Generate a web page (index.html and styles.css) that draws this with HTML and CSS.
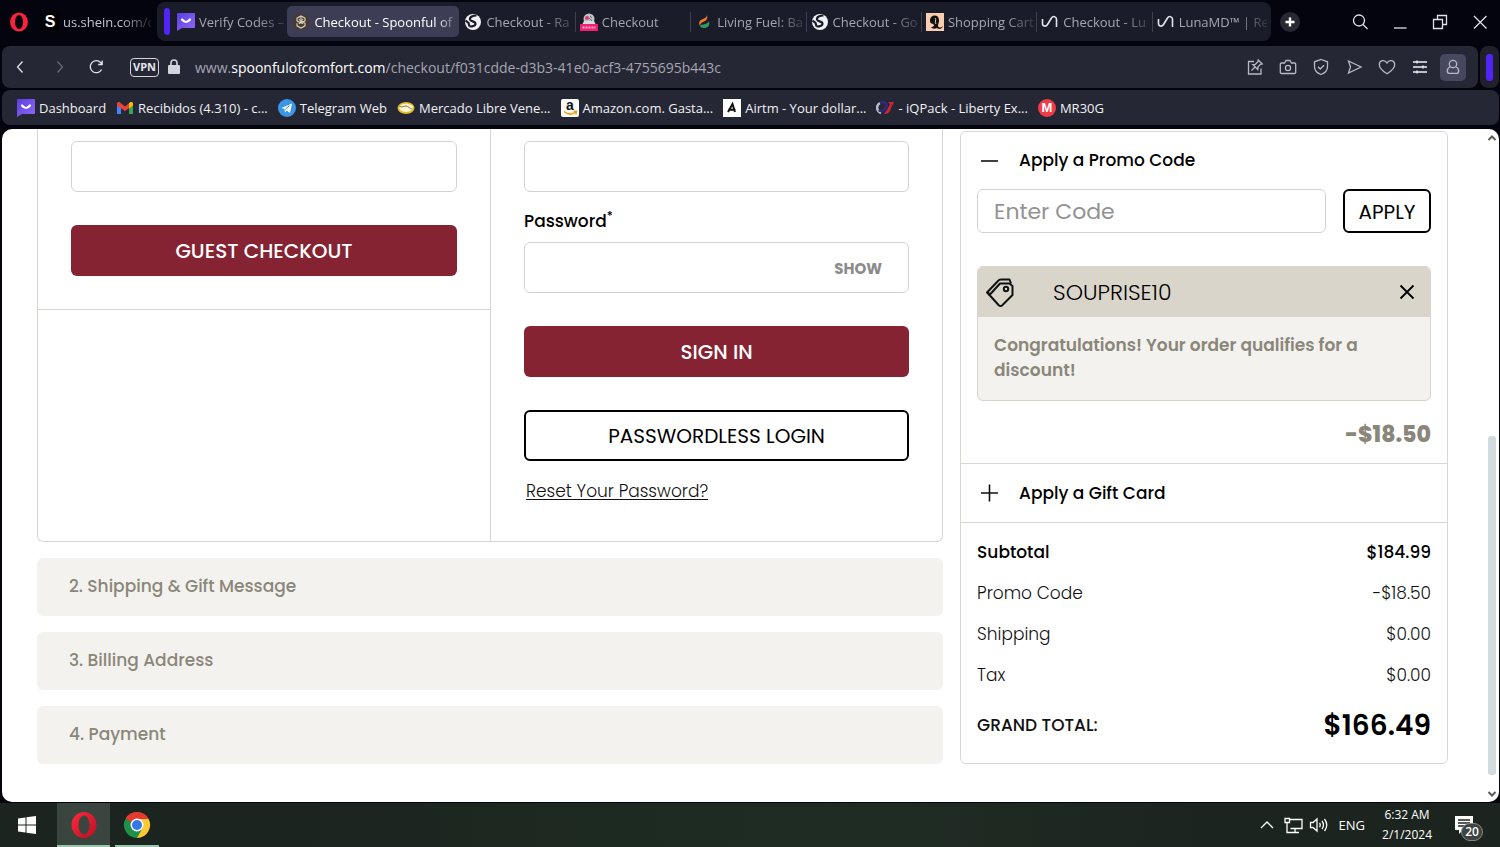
FILE: index.html
```html
<!DOCTYPE html>
<html lang="en">
<head>
<meta charset="utf-8">
<meta name="viewport" content="width=device-width, initial-scale=1">
<title>Checkout - Spoonful of Comfort</title>
<link rel="stylesheet" href="styles.css">
</head>
<body>
<svg class="defs" aria-hidden="true">
  <defs>
    <linearGradient id="violet" x1="0" y1="0" x2="1" y2="1"><stop offset="0" stop-color="#5a3fe0"/><stop offset="1" stop-color="#9068f5"/></linearGradient>
    <linearGradient id="red" x1="0" y1="0" x2="1" y2="1"><stop offset="0" stop-color="#ff2a3c"/><stop offset="1" stop-color="#b80f22"/></linearGradient>
  </defs>
  <symbol id="chat" viewBox="0 0 18 18"><path d="M1 0h16a1 1 0 0 1 1 1v13a1 1 0 0 1-1 1H5l-5 3V1a1 1 0 0 1 1-1z" fill="url(#violet)"/><path d="M5 6.500q4 5 8 0" fill="none" stroke="#fff" stroke-width="2.200" stroke-linecap="round"/></symbol>
  <symbol id="globe" viewBox="0 0 18 18"><circle cx="9" cy="9" r="8" fill="#f1f2f5"/><path d="M12.500 2.500C9 2.500 5.500 4 6 6.500c.5 2.300 6 1.500 5.500 4.500-.4 2.200-3.500 2.500-6 2.500M1.500 7.500l3 2.500 1 3.500" fill="none" stroke="#1b1c2a" stroke-width="2.200"/></symbol>
  <symbol id="wave" viewBox="0 0 18 18"><path d="M1.500 6v4.500c0 3 3.500 3.500 5 1l4-6.500c1.500-2.500 5-1.500 5 1.200V14" fill="none" stroke="#e4e5ea" stroke-width="1.600"/></symbol>
</svg>

<header class="browser">
  <div class="titlebar">
    <svg class="opera" viewBox="0 0 20 20"><ellipse cx="10" cy="10" rx="9" ry="9.500" fill="#f5233c"/><ellipse cx="10" cy="10" rx="4" ry="7" fill="#04040f"/></svg>
    <a class="tab pinned" href="#"><span class="fav fav-s">S</span><span class="tab-text">us.shein.com/c</span></a>
    <nav class="tabgroup" aria-label="Tabs">
      <span class="group-bar"></span>
      <a class="tab plain" href="#"><svg class="fav"><use href="#chat"/></svg><span class="tab-text">Verify Codes –</span></a>
      <a class="tab active" href="#"><svg class="fav" viewBox="0 0 18 18"><circle cx="9" cy="9" r="8.500" fill="#443b35"/><path d="M9 3l4 2.200v2.600L9 10 5 7.800V5.200zM5 10.200v2.600L9 15l4-2.200v-2.600L9 8M9 3v4M7 6l4 5M11 6l-4 5" fill="none" stroke="#ddd0bd" stroke-width="1.100"/></svg><span class="tab-text">Checkout - Spoonful of</span></a>
      <a class="tab plain" href="#"><svg class="fav"><use href="#globe"/></svg><span class="tab-text">Checkout - Ra</span></a>
      <a class="tab" href="#"><svg class="fav" viewBox="0 0 18 18"><circle cx="9" cy="6" r="5.500" fill="#bfc0c8"/><path d="M4 8h10l2 4H2z" fill="#d9d9df"/><circle cx="7" cy="5" r="2" fill="#d93f68"/><path d="M9 5l3 3M10 3l2 2" stroke="#666672"/><rect y="11" width="18" height="7" fill="#f01f70"/><path d="M2.500 14.500h13" stroke="#ffb3d0" stroke-width="2" stroke-dasharray="2 1"/></svg><span class="tab-text">Checkout</span></a>
      <a class="tab" href="#"><svg class="fav" viewBox="0 0 18 18"><path d="M12 2c1 4-1 6-4 7-2 1-3 2-3 4-2-4 0-6 3-7 2-1 4-2 4-4z" fill="#f07a2a"/><path d="M14 8c1 5-1 7-5 7-2 0-4-1-4-2 1-2 3-1 5-2s3-1 4-3z" fill="#2f9a63"/></svg><span class="tab-text">Living Fuel: Ba</span></a>
      <a class="tab" href="#"><svg class="fav"><use href="#globe"/></svg><span class="tab-text">Checkout - Go</span></a>
      <a class="tab" href="#"><svg class="fav" viewBox="0 0 18 18"><rect width="18" height="18" fill="#f8cdb0"/><path d="M4 8c0-7 9-7 9-1 0 3-1 4-1 6 1 2 3 2 5 0-1 3-4 4-6 2-2 1-5 1-6-1 3 0 4-2 2-3S4 10 4 8z" fill="#111"/><path d="M9 5c2 2-1 4 1 6" fill="none" stroke="#f8cdb0"/></svg><span class="tab-text">Shopping Cart</span></a>
      <a class="tab" href="#"><svg class="fav"><use href="#wave"/></svg><span class="tab-text">Checkout - Lu</span></a>
      <a class="tab" href="#"><svg class="fav"><use href="#wave"/></svg><span class="tab-text">LunaMD™ | Re</span></a>
    </nav>
    <button class="newtab" aria-label="New tab"><svg viewBox="0 0 20 20"><path d="M10 5.500v9M5.500 10h9" stroke="#fff" stroke-width="2.400"/></svg></button>
    <div class="window-buttons">
      <button aria-label="Search tabs"><svg viewBox="0 0 20 20"><circle cx="9" cy="8.500" r="5.500"/><path d="M13 12.500l4.500 4.500"/></svg></button>
      <button aria-label="Minimize"><svg viewBox="0 0 20 20"><path d="M4 16h12.500"/></svg></button>
      <button aria-label="Restore"><svg viewBox="0 0 20 20"><path d="M3.500 7.500h9v9h-9zM7.500 7.500v-4h9v9h-4"/></svg></button>
      <button aria-label="Close"><svg viewBox="0 0 20 20"><path d="M4 4l12.500 12.500M16.500 4L4 16.500"/></svg></button>
    </div>
  </div>

  <div class="toolrow">
    <div class="toolbar">
      <button class="nav-btn" aria-label="Back"><svg viewBox="0 0 20 20"><path d="M12.500 4.500L7.500 10l5 5.500"/></svg></button>
      <button class="nav-btn dim" aria-label="Forward"><svg viewBox="0 0 20 20"><path d="M9.500 4.500l5 5.500-5 5.500"/></svg></button>
      <button class="nav-btn reload" aria-label="Reload"><svg viewBox="0 0 20 20"><path d="M15.600 12.500a6 6 0 1 1-1-7L16 7M16.200 3.500V7.500h-4"/></svg></button>
      <button class="vpn">VPN</button>
      <svg class="lock" viewBox="0 0 14 18"><rect x="1" y="7" width="12" height="9" rx="1" fill="#d4d5dc"/><path d="M4 8V5a3 3 0 0 1 6 0v3" fill="none" stroke="#d4d5dc" stroke-width="1.600"/></svg>
      <a class="url" href="#">www.<b>spoonfulofcomfort.com</b>/checkout/f031cdde-d3b3-41e0-acf3-4755695b443c</a>
      <div class="tools">
        <button aria-label="Pin page"><svg viewBox="0 0 20 20"><path d="M9 4.500H3.500v12.500H16V11.500M13.200 3l4 4-1.700.4-2.500 2.500-.2 2.600-5-5 2.600-.2 2.500-2.500zM10 10l-3.500 3.500"/></svg></button>
        <button aria-label="Snapshot"><svg viewBox="0 0 20 20"><path d="M3.500 6h3L8 3.500h4L13.500 6h3a1.200 1.200 0 0 1 1.200 1.200v8a1.200 1.200 0 0 1-1.200 1.300h-13a1.200 1.200 0 0 1-1.200-1.300v-8A1.200 1.200 0 0 1 3.500 6z"/><circle cx="10" cy="11" r="2.600"/></svg></button>
        <button aria-label="Tracker blocker"><svg viewBox="0 0 20 20"><path d="M10 2.500l6.500 2.300v5c0 4-3 6.500-6.500 7.700-3.500-1.200-6.500-3.700-6.500-7.700v-5zM7 9.800l2.200 2.200L13 8.200"/></svg></button>
        <button aria-label="Send"><svg viewBox="0 0 20 20"><path d="M4.500 4L17 10 4.500 16l2-6z"/></svg></button>
        <button aria-label="Favorites"><svg viewBox="0 0 20 20"><path d="M10 16.800C5.500 14 2.300 11 2.300 7.500 2.300 3 8 2.300 10 6c2-3.700 7.700-3 7.700 1.500C17.700 11 14.500 14 10 16.800z"/></svg></button>
        <button class="bright" aria-label="Easy setup"><svg viewBox="0 0 20 20"><path d="M3 5h14M3 10h14M3 15h14M7 3.500v3M13 8.500v3M7 13.500v3"/></svg></button>
        <button class="profile" aria-label="Profile"><svg viewBox="0 0 20 20"><circle cx="10" cy="7" r="3.700"/><path d="M7 9.800C3 12 4.200 16.300 6 16.300h8c1.800 0 3-4.300-1-6.500"/></svg></button>
      </div>
    </div>
    <div class="side-toggle"><span></span></div>
  </div>

  <nav class="bookmarks" aria-label="Bookmarks">
    <a href="#"><svg class="fav"><use href="#chat"/></svg>Dashboard</a>
    <a href="#"><svg class="fav" viewBox="0 0 18 18"><path d="M1 4v11h4V8z" fill="#4285f4"/><path d="M17 4v11h-4V8z" fill="#34a853"/><path d="M1 5c0-2 2-2.500 3-1.500L9 7.500l5-4C15 2.500 17 3 17 5v1.500L9 12 1 6.500z" fill="#ea4335"/><path d="M14 3.500C15 2.500 17 3 17 5v1.500l-4 3V4z" fill="#fbbc04"/></svg>Recibidos (4.310) - c...</a>
    <a href="#"><svg class="fav" viewBox="0 0 18 18"><circle cx="9" cy="9" r="9" fill="#3a97e8"/><path d="M3.500 9L14 4.500 12 14 8.500 11.500 7 13.500 6.500 10z" fill="#fff"/><path d="M7 10.500l4.500-3.800" stroke="#3a97e8"/></svg>Telegram Web</a>
    <a href="#"><svg class="fav" viewBox="0 0 18 18"><ellipse cx="9" cy="9" rx="8.500" ry="6" fill="#e3bd28"/><path d="M2 7q7-5 14 0l-1 4q-6 4-12 0z" fill="#fff6d8"/><path d="M2 7c3 2 5 0 7 0s4 3 6 3" fill="none" stroke="#8d7832"/></svg>Mercado Libre Vene...</a>
    <a href="#"><svg class="fav amazon" viewBox="0 0 18 18"><rect width="18" height="18" rx="2" fill="#fff"/><text class="amazon-a" x="9" y="11" text-anchor="middle">a</text><path d="M3 12.500q6 5 11.500.5M14.800 15.500l.7-3.200-3 .2" fill="none" stroke="#f90" stroke-width="1.500"/></svg>Amazon.com. Gasta...</a>
    <a href="#"><svg class="fav" viewBox="0 0 18 18"><rect width="18" height="18" fill="#fff"/><path d="M5 13l4.500-8 2.500 8M5.500 10.500l7 .5" fill="none" stroke="#111" stroke-width="2"/></svg>Airtm - Your dollar...</a>
    <a href="#"><svg class="fav" viewBox="0 0 18 18"><path d="M4 4C0 6 0 12 5 14" fill="none" stroke="#b9bac4" stroke-width="2.500"/><path d="M4 4c5-2 8 0 6 4s-5 5-7 3" fill="none" stroke="#2d2a7c" stroke-width="2.500"/><path d="M18 3h-6l2 2-3 6-3 4c4 0 6-2 7-6z" fill="#cf2436"/></svg>- iQPack - Liberty Ex...</a>
    <a href="#"><span class="fav fav-m">M</span>MR30G</a>
  </nav>
</header>

<main class="page">
  <div class="checkout">
    <div class="steps">
      <section class="account" aria-label="Account">
        <form class="guest">
          <input class="field" type="email" aria-label="Guest email">
          <button class="btn solid" type="button">GUEST CHECKOUT</button>
        </form>
        <form class="signin">
          <input class="field" type="email" aria-label="Email">
          <label class="label" for="password">Password<sup>*</sup></label>
          <div class="password"><input class="field" id="password" type="password"><button class="show" type="button">SHOW</button></div>
          <button class="btn solid" type="button">SIGN IN</button>
          <button class="btn outline" type="button">PASSWORDLESS LOGIN</button>
          <a class="reset" href="#">Reset Your Password?</a>
        </form>
      </section>
      <h2 class="step">2. Shipping &amp; Gift Message</h2>
      <h2 class="step">3. Billing Address</h2>
      <h2 class="step">4. Payment</h2>
    </div>

    <aside class="summary">
      <section class="promo">
        <button class="toggle" type="button" aria-expanded="true"><svg viewBox="0 0 20 20"><path d="M2 10h17"/></svg>Apply a Promo Code</button>
        <form class="code-row">
          <input class="code" type="text" placeholder="Enter Code" aria-label="Promo code">
          <button class="apply" type="button">APPLY</button>
        </form>
        <div class="coupon">
          <div class="coupon-head">
            <svg class="tag" viewBox="0 0 30 30"><path d="M15 6.500h9.500l3 2.500v9L17 28.500q-1.500 1-3 0L4.500 18z"/><path d="M4.500 18L2 15.500 13 4q1-1.500 3-1.500h8.500l1.500 4M3 15l1.500 3"/><circle cx="21" cy="12" r="2.200"/></svg>
            <span>SOUPRISE10</span>
            <button class="remove" type="button" aria-label="Remove code"><svg viewBox="0 0 20 20"><path d="M3.500 3.500l13 13M16.500 3.500l-13 13"/></svg></button>
          </div>
          <p>Congratulations! Your order qualifies for a discount!</p>
        </div>
        <p class="discount">-$18.50</p>
      </section>
      <section class="gift">
        <button class="toggle" type="button" aria-expanded="false"><svg viewBox="0 0 20 20"><path d="M2 10h17M10.500 1.500v17"/></svg>Apply a Gift Card</button>
      </section>
      <table class="totals">
        <tr class="subtotal"><th scope="row">Subtotal</th><td>$184.99</td></tr>
        <tr><th scope="row">Promo Code</th><td>-$18.50</td></tr>
        <tr><th scope="row">Shipping</th><td>$0.00</td></tr>
        <tr><th scope="row">Tax</th><td>$0.00</td></tr>
        <tr class="grand"><th scope="row">GRAND TOTAL:</th><td>$166.49</td></tr>
      </table>
    </aside>
  </div>
  <div class="scrollbar" aria-hidden="true">
    <svg viewBox="0 0 10 10"><path d="M1.500 7L5 3.500 8.500 7"/></svg>
    <span class="track"></span>
    <span class="thumb"></span>
    <svg viewBox="0 0 10 10"><path d="M1.500 3L5 6.500 8.500 3"/></svg>
  </div>
</main>

<footer class="taskbar">
  <button class="start" aria-label="Start"><svg viewBox="0 0 20 20"><path d="M1 3.500l7.500-1v7H1zM9.500 2.300L19 1v8.500H9.500zM1 10.500h7.500v7l-7.500-1zM9.500 10.500H19V19l-9.500-1.300z" fill="#fff"/></svg></button>
  <button class="task current" aria-label="Opera"><svg viewBox="0 0 28 28"><ellipse cx="14" cy="14" rx="12.500" ry="13" fill="url(#red)"/><ellipse cx="14" cy="14" rx="5.500" ry="9.500" fill="#3a453f"/></svg></button>
  <button class="task" aria-label="Chrome"><svg viewBox="0 0 28 28"><path d="M14 14L2.700 7.500A13 13 0 0 1 25.300 7.500z" fill="#e33b2e"/><path d="M14 14l11.300-6.500A13 13 0 0 1 14 27z" fill="#fcc934"/><path d="M14 14l5.500 3.200L14 27A13 13 0 0 1 2.700 7.500z" fill="#1e9049"/><path d="M14 8h11.500l-6 9.500z" fill="#fcc934"/><path d="M2.700 7.500A13 13 0 0 1 25.300 7.500V8H14l-5 4z" fill="#e33b2e"/><circle cx="14" cy="14" r="6.500" fill="#fff"/><circle cx="14" cy="14" r="5" fill="#3478e8"/></svg></button>
  <div class="tray">
    <svg viewBox="0 0 20 20"><path d="M4 13l6-6 6 6"/></svg>
    <svg viewBox="0 0 20 20"><path d="M6.500 4.500H19v9H7.500M12 13.500V17M8 17.500h8M2 3.500h4.500v4H2zM4 7.500v10h4"/></svg>
    <svg viewBox="0 0 20 20"><path d="M1.500 7.500H4l4-3.500v12l-4-3.500H1.500zM10.500 8q1.500 2 0 4M13 6q3 4 0 8M15.500 4q4.500 6 0 12"/></svg>
    <span class="lang">ENG</span>
    <span class="clock"><time>6:32 AM</time><time>2/1/2024</time></span>
    <button class="notes" aria-label="Notifications"><svg viewBox="0 0 20 20"><path d="M1 1h18v14H9l-4 4v-4H1z" fill="#fff"/><path d="M4 5h12M4 8h12M4 11h7" stroke="#1e2722" stroke-width="1.300"/></svg><span>20</span></button>
  </div>
</footer>
</body>
</html>
```
FILE: styles.css
```css
* { box-sizing: border-box; }
body {
  margin: 0;
  min-height: 100vh;
  display: flex;
  flex-direction: column;
  background: #04040f;
  font-family: "Segoe UI", "Open Sans", "Noto Sans", sans-serif;
  font-size: 13px;
  color: #000;
}
button { font: inherit; color: inherit; background: none; border: 0; padding: 0; }
a { color: inherit; text-decoration: none; }
p, h2 { margin: 0; }
svg { flex: none; }
.defs { position: absolute; width: 0; height: 0; }
.fav { width: 18px; height: 18px; flex: none; }

/* Browser chrome */
.browser { display: flex; flex-direction: column; padding: 2px 1px 4px 2px; }
.titlebar { display: flex; align-items: center; height: 39px; color: #a5a6b2; }
.opera { width: 20px; height: 20px; margin-left: 7px; }
.tab { display: flex; align-items: center; gap: 4px; height: 31px; min-width: 0; flex: 115 1 0; padding: 0 0 0 5px; position: relative; }
.tab::before { content: ""; position: absolute; left: 0; top: 6px; width: 1px; height: 20px; background: #3f404f; }
.tab.plain::before, .tab.active::before, .tab.pinned::before { display: none; }
.tab-text { flex: 1; min-width: 0; white-space: nowrap; mask-image: linear-gradient(to right, #000 65%, rgba(0, 0, 0, .15)); }
.tab.pinned { flex: none; width: 122px; padding: 0 0 0 12px; }
.tab.pinned .tab-text { color: #c3c4cd; }
.fav-s { background: #000; color: #fff; font: 700 16px/18px "Liberation Sans", sans-serif; text-align: center; }
.tabgroup { flex: 1; min-width: 0; display: flex; align-items: center; height: 39px; margin-left: 6px; padding: 0 4px 0 7px; background: #1b1c2a; border-radius: 8px; }
.group-bar { width: 6px; height: 27px; border-radius: 3px; background: #5024f4; margin-right: 2px; }
.tab.active { flex-grow: 174; background: #3d3e56; color: #fff; border-radius: 5px; }
.tab.active .tab-text { mask-image: linear-gradient(to right, #000 85%, transparent); }
.newtab { width: 20px; height: 20px; border-radius: 50%; background: #272833; margin: 0 50px 0 9px; }
.newtab svg { display: block; }
.window-buttons { display: flex; gap: 20px; padding-right: 9px; }
.window-buttons svg, .nav-btn svg, .tools svg { display: block; width: 20px; height: 20px; fill: none; stroke: #e1e2e8; stroke-width: 1.3; }
.toolrow { display: flex; gap: 2px; margin-top: 5px; }
.toolbar { flex: 1; min-width: 0; display: flex; align-items: center; height: 42px; padding: 0 12px 0 8px; background: #262734; border-radius: 8px; }
.nav-btn { margin-right: 18px; }
.nav-btn.dim { opacity: .35; }
.nav-btn.reload { margin-right: 24px; }
.vpn { width: 29px; height: 19px; border: 1px solid #d4d5dc; border-radius: 4px; color: #e5e6ec; font-size: 11px; font-weight: 700; line-height: 16px; }
.lock { width: 14px; height: 18px; margin: 0 14px 0 8px; }
.url { flex: 1; min-width: 0; white-space: nowrap; color: #a5a6b2; font-size: 14px; }
.url b { font-weight: 500; color: #fff; }
.tools { display: flex; align-items: center; gap: 13px; }
.tools svg { stroke: #b8b9c4; }
.tools .bright svg { stroke: #f1f1f5; }
.tools .profile { width: 26px; height: 27px; padding: 3px; border-radius: 5px; background: #464860; margin-left: -3px; }
.side-toggle { width: 19px; display: flex; align-items: center; justify-content: center; background: #1f202c; border-radius: 8px; }
.side-toggle span { width: 7px; height: 27px; border-radius: 3px; background: #5024f4; }
.bookmarks { display: flex; align-items: center; gap: 10px; height: 35px; margin-top: 2px; padding: 0 15px; background: #262734; border-radius: 8px; color: #f0f0f5; white-space: nowrap; }
.bookmarks a { display: flex; align-items: center; gap: 4px; }
.fav-m { border-radius: 50%; background: #ef3c48; color: #fff; font: 700 13px/18px "Liberation Sans", sans-serif; text-align: center; }
.amazon { overflow: visible; }
.amazon-a { font: 700 14px "Liberation Sans", sans-serif; fill: #111; }

/* Checkout page */
.page { flex: 1; display: flex; margin: 0 1px 0 2px; background: #fff; border-radius: 10px; font-family: Poppins, Inter, sans-serif; font-size: 17px; line-height: 25px; }
.checkout { flex: 1; min-width: 0; display: grid; grid-template-columns: 65fr 35fr; gap: 17px; align-items: start; padding: 0 37px 38px 35px; }
.steps { display: flex; flex-direction: column; gap: 16px; min-width: 0; }
.account { display: grid; grid-template-columns: 1fr 1fr; border: 1px solid #d7d7d2; border-top: 0; border-radius: 0 0 6px 6px; }
.guest, .signin { display: flex; flex-direction: column; padding: 12px 33px 33px; }
.guest { gap: 33px; align-self: start; border-bottom: 1px solid #d7d7d2; }
.signin { border-left: 1px solid #d7d7d2; padding-bottom: 37px; }
.field { width: 100%; height: 51px; padding: 0 16px; border: 1px solid #d2d2cf; border-radius: 6px; background: #fff; font: inherit; }
.label { font-weight: 500; line-height: 24px; padding: 17px 0 9px; }
.label sup { font-size: 12px; line-height: 0; }
.password { position: relative; display: flex; margin-bottom: 33px; }
.show { position: absolute; right: 27px; top: 14px; color: #8b8b8b; font-size: 15px; font-weight: 700; }
.btn { height: 51px; padding-top: 2px; border-radius: 6px; font-size: 20px; font-weight: 500; }
.solid { background: #862333; color: #fff; }
.outline { margin-top: 33px; border: 2px solid #000; font-weight: 400; }
.reset { align-self: flex-start; margin: 18px 0 0 2px; color: #111; font-weight: 300; text-decoration: underline; text-underline-offset: 2px; }
.step { padding: 16px 32px 17px; border-radius: 6px; background: #f4f2ee; color: #8a867a; font-size: 17px; font-weight: 500; line-height: 25px; }

.summary { min-width: 0; margin-top: 2px; border: 1px solid #d7d7d2; border-radius: 6px; }
.promo { padding: 0 16px 14px; border-bottom: 1px solid #d7d7d2; }
.toggle { display: flex; align-items: center; gap: 20px; height: 57px; font-weight: 500; padding-left: 2px; }
.toggle svg { width: 20px; height: 20px; fill: none; stroke: #111; stroke-width: 1.6; }
.code-row { display: flex; gap: 17px; }
.code { flex: 1; min-width: 0; height: 44px; padding: 0 16px; border: 1px solid #d2d2cf; border-radius: 6px; font: inherit; font-size: 22px; }
.code::placeholder { color: #929292; }
.apply { width: 88px; height: 44px; padding-top: 2px; border: 2px solid #000; border-radius: 6px; font-size: 20px; font-weight: 400; }
.coupon { margin-top: 33px; border: 1px solid #d9d5ca; border-radius: 6px; background: #f4f2ee; overflow: hidden; }
.coupon-head { display: flex; align-items: center; height: 50px; padding: 0 13px 0 7px; background: #d9d5ca; font-size: 22px; font-weight: 300; }
.coupon-head span { flex: 1; padding-left: 38px; }
.tag { width: 30px; height: 30px; fill: none; stroke: #111; stroke-width: 2; stroke-linejoin: round; }
.remove svg { display: block; width: 20px; height: 20px; fill: none; stroke: #000; stroke-width: 1.8; }
.coupon p { padding: 16px 16px 17px; color: #8a867a; font-weight: 600; }
.discount { margin-top: 19px; line-height: 29px; text-align: right; color: #8a867a; font-size: 22px; font-weight: 800; }
.gift { padding: 0 16px; border-bottom: 1px solid #d7d7d2; }
.gift .toggle { height: 58px; }
.totals { width: 100%; margin: 9px 0 8px; border-spacing: 0; }
.totals th, .totals td { height: 41px; padding: 0 16px; text-align: left; font-weight: 300; color: #111; }
.totals td { text-align: right; }
.totals .subtotal th, .totals .subtotal td { font-weight: 500; color: #000; }
.totals .grand th { height: 59px; font-weight: 500; }
.totals .grand td { font-size: 28px; font-weight: 600; color: #000; }

.scrollbar { width: 14px; display: flex; flex-direction: column; align-items: center; padding: 4px 0 3px; }
.scrollbar svg { width: 10px; height: 10px; fill: none; stroke: #5a5a5a; stroke-width: 2; }
.track { flex: 293 0 0; }
.thumb { flex: 340 0 0; width: 8px; border-radius: 3px; background: #d2dbde; margin-bottom: 14px; }

/* Taskbar */
.taskbar { display: flex; height: 44px; margin-top: 1px; background: linear-gradient(to right, #1c241f 20%, #1d2b22 45%, #1f2c24 60%, #1c241f 80%); color: #fff; }
.start { width: 56px; padding-right: 3px; display: flex; align-items: center; justify-content: center; }
.start svg { width: 20px; height: 20px; }
.task { width: 44px; height: 44px; margin-left: 5px; border-bottom: 2px solid #9cc5ae; }
.task svg { display: block; width: 28px; height: 28px; margin: 2px auto 0; }
.task.current { width: 53px; margin: 0 0 0 1px; background: #3a453f; }
.tray { margin-left: auto; display: flex; align-items: center; gap: 6px; padding-right: 18px; }
.tray svg { width: 20px; height: 20px; fill: none; stroke: #fff; stroke-width: 1.3; }
.lang { margin-left: 4px; }
.clock { display: flex; flex-direction: column; text-align: center; line-height: 20px; margin-left: 11px; font-size: 12px; }
.notes { position: relative; margin-left: 16px; width: 28px; height: 20px; text-align: left; }
.notes svg { display: block; stroke: none; }
.notes span { position: absolute; left: 7px; top: 8px; width: 22px; height: 18px; border: 1px solid #888; border-radius: 9px; background: #3d4440; font-size: 12px; font-weight: 600; line-height: 16px; text-align: center; }
```
